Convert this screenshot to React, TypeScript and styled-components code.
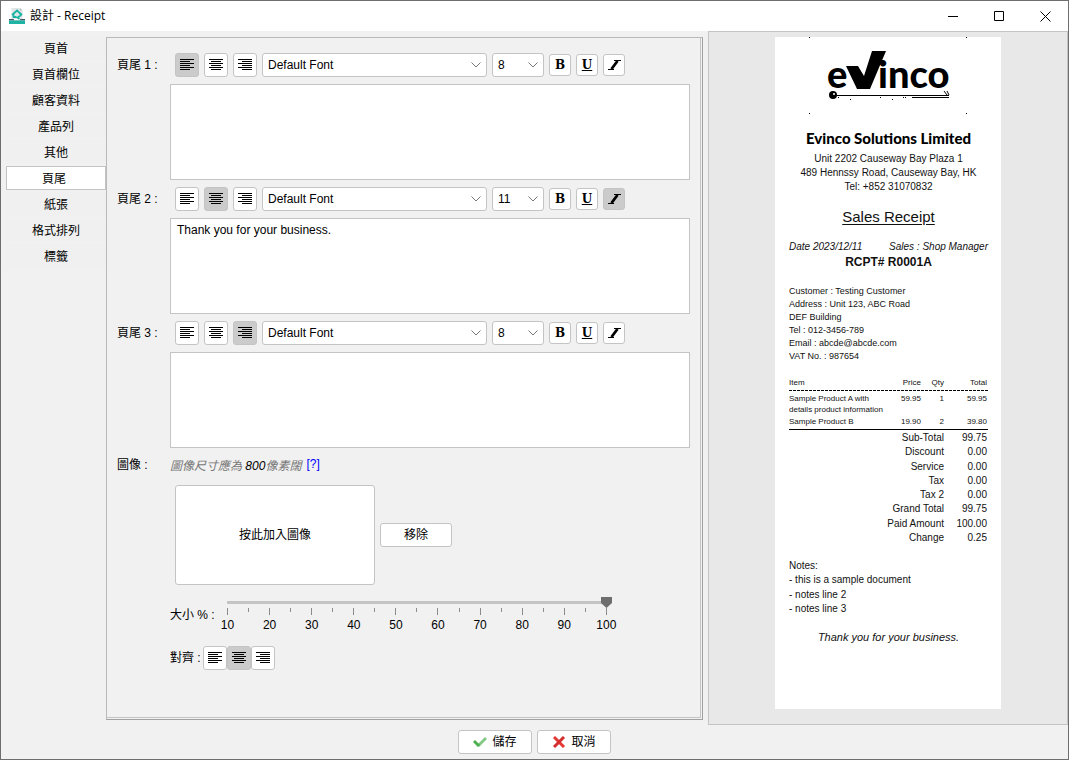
import React, { useState } from "react";
import styled, { createGlobalStyle, css } from "styled-components";

const sans = `"Liberation Sans", "Noto Sans CJK TC", sans-serif`;
const line = "#c4c4c4";

const GlobalStyle = createGlobalStyle`
  *, *::before, *::after { box-sizing: border-box; }
  body { margin: 0; background: #f1f1f1; color: #000; font: 12px/16px ${sans}; }
  button, select, textarea, input { font: inherit; color: inherit; }
`;

const Window = styled.div`
  display: flex;
  flex-direction: column;
  min-height: 100vh;
  border: 1px solid #6e6e6e;
`;

const TitleBar = styled.header`
  display: flex;
  align-items: center;
  height: 30px;
  padding-left: 8px;
  background: #fff;
`;

const Title = styled.h1`
  flex: 1;
  margin: 0 0 0 5px;
  font: 400 12px/16px "Open Sans", "Noto Sans CJK TC", sans-serif;
`;

const CaptionButton = styled.button`
  display: grid;
  place-items: center;
  width: 46px;
  height: 30px;
  padding: 0;
  border: 0;
  background: none;
`;

const Main = styled.main`
  flex: 1;
  display: grid;
  grid-template-columns: 100px minmax(0, 1fr) 360px;
  padding-left: 5px;
`;

const Tabs = styled.nav`
  display: flex;
  flex-direction: column;
  gap: 2px;
  padding-top: 5px;
`;

const Tab = styled.button<{ $active?: boolean }>`
  height: 24px;
  padding: 2px ${(p) => (p.$active ? 4 : 0)}px 0 0;
  border: 1px solid ${(p) => (p.$active ? line : "#f0f0f0")};
  background: ${(p) => (p.$active ? "#fff" : "#f0f0f0")};
`;

const Panel = styled.section`
  display: grid;
  grid-template-columns: 53px minmax(0, 1fr);
  align-content: start;
  margin: 6px 5px 5px 0;
  padding: 15px 12px 0 10px;
  border: 1px solid #b9b9b9;
  border-right-color: #a0a0a0;
  border-bottom-color: #a0a0a0;
  box-shadow: inset -1px -1px 0 #f1f1f1, inset -2px -2px 0 ${line};
`;

const FieldLabel = styled.label<{ $compact?: boolean }>`
  line-height: ${(p) => (p.$compact ? 20 : 24)}px;
`;

const Field = styled.div`
  margin-bottom: 7px;
`;

const Toolbar = styled.div<{ $joined?: boolean }>`
  display: flex;
  align-items: center;
  gap: ${(p) => (p.$joined ? 0 : 5)}px;
  padding-left: ${(p) => (p.$joined ? 0 : 5)}px;
`;

const frame = css`
  border: 1px solid ${line};
  border-radius: 3px;
  background: #fff;
`;

const ToolButton = styled.button<{ $on?: boolean; $small?: boolean }>`
  ${frame}
  display: grid;
  place-items: center;
  flex: none;
  width: ${(p) => (p.$small ? 22 : 24)}px;
  height: ${(p) => (p.$small ? 22 : 24)}px;
  padding: 0;
  background: ${(p) => (p.$on ? "#cbcbcb" : "#fff")};
  font: 700 12px/16px "DejaVu Serif", serif;
`;

const SelectBox = styled.span<{ $width: number }>`
  position: relative;
  width: ${(p) => p.$width}px;
  height: 24px;
`;

const SelectInput = styled.select`
  ${frame}
  appearance: none;
  width: 100%;
  height: 100%;
  padding: 0 20px 0 5px;
`;

const Chevron = styled.svg`
  position: absolute;
  top: 9px;
  right: 6px;
  pointer-events: none;
`;

const TextArea = styled.textarea`
  display: block;
  width: 100%;
  height: 96px;
  margin-top: 7px;
  padding: 3px 6px;
  border: 1px solid ${line};
  background: #fff;
  resize: none;
`;

const Hint = styled.p`
  display: flex;
  gap: 5px;
  margin: 0;
  line-height: 22px;
  color: #777;
  b { font-weight: 400; color: #000; }
  a { color: #00f; text-decoration: none; line-height: 18px; }
`;

const ImageRow = styled.div`
  display: flex;
  align-items: center;
  gap: 5px;
  padding: 8px 0 0 5px;
`;

const PushButton = styled.button<{ $w: number; $h: number }>`
  ${frame}
  display: flex;
  align-items: center;
  justify-content: center;
  gap: 5px;
  width: ${(p) => p.$w}px;
  height: ${(p) => p.$h}px;
  padding: 0;
`;

const SliderRow = styled.div`
  display: flex;
  align-items: center;
  margin-top: 12px;
`;

const SliderLabel = styled.label`
  width: 47px;
  white-space: nowrap;
`;

const SliderBody = styled.div`
  width: 400px;
`;

const Range = styled.input`
  appearance: none;
  display: block;
  width: 390px;
  height: 11px;
  margin: 0 5px;
  background: transparent;
  &::-webkit-slider-runnable-track {
    height: 11px;
    background: linear-gradient(${line}, ${line}) center / calc(100% - 10px) 3px no-repeat;
  }
  &::-webkit-slider-thumb {
    appearance: none;
    width: 11px;
    height: 11px;
    background: #6e6e6e;
    clip-path: polygon(0 0, 100% 0, 100% 55%, 50% 100%, 0 55%);
  }
`;

const Scale = styled.div`
  display: flex;
`;

const Tick = styled.span<{ $major: boolean }>`
  display: flex;
  flex: 1 1 0;
  flex-direction: column;
  align-items: center;
  min-width: 0;
  &::before {
    content: "";
    width: 1px;
    height: ${(p) => (p.$major ? 7 : 4)}px;
    background: #8c8c8c;
    margin-bottom: 2px;
  }
`;

const AlignRow = styled.div`
  display: flex;
  align-items: center;
  margin-top: 13px;
  > span { width: 33px; }
`;

const Preview = styled.aside`
  display: flex;
  justify-content: center;
  padding: 5px 0 15px;
  border: 1px solid ${line};
  background: #e8e8e8;
`;

const Paper = styled.article`
  width: 226px;
  padding: 0 13px 0 14px;
  background: #fff;
  color: #111;
  font-size: 10px;
  line-height: 14px;
`;

const LogoArt = styled.svg`
  display: block;
  margin: 0 auto;
`;

const Company = styled.h2`
  margin: 16px 0 6px;
  text-align: center;
  font: 900 15px/16px Lato, sans-serif;
  color: #000;
`;

const Centered = styled.p`
  margin: 0;
  text-align: center;
`;

const DocTitle = styled.h3`
  margin: 14px 0 13px;
  text-align: center;
  font-size: 15px;
  line-height: 18px;
  font-weight: 400;
  text-decoration: underline;
  text-underline-offset: 2px;
`;

const DateRow = styled.div`
  display: flex;
  justify-content: space-between;
  font-style: italic;
  line-height: 16px;
`;

const Number = styled.p`
  margin: 0 0 16px;
  text-align: center;
  font-size: 12px;
  font-weight: 700;
`;

const Customer = styled.address`
  font-size: 9px;
  line-height: 13px;
  font-style: normal;
`;

const Items = styled.table`
  width: 199px;
  margin-top: 14px;
  table-layout: fixed;
  border-collapse: collapse;
  border-bottom: 1px solid #000;
  font-size: 8px;
  line-height: 11px;
  thead {
    background: repeating-linear-gradient(90deg, #000 0 3px, transparent 3px 4px) bottom / 100% 1px no-repeat;
  }
  th, td { padding: 0 1px 0 0; font-weight: 400; text-align: right; vertical-align: top; }
  th { padding-bottom: 3px; }
  tbody td { padding-top: 2px; }
  tr + tr td { padding-top: 1px; padding-bottom: 2px; }
  th:first-child, td:first-child { padding-right: 0; text-align: left; }
`;

const Totals = styled.table`
  width: 199px;
  margin-top: 1px;
  border-collapse: collapse;
  table-layout: fixed;
  th, td { padding: 0 1px 0 0; font-weight: 400; text-align: right; }
  tr:nth-child(4n + 3) > * { padding-top: 1px; }
`;

const Notes = styled.div`
  margin: 14px 0;
  div:nth-child(3) { padding-top: 1px; }
`;

const Thanks = styled.p`
  margin: 0;
  text-align: center;
  font-size: 11px;
  font-style: italic;
`;

const Footer = styled.footer`
  display: flex;
  justify-content: center;
  gap: 5px;
  padding: 5px 0;
`;

type Align = "left" | "center" | "right";

const alignNames: Record<Align, string> = { left: "靠左", center: "置中", right: "靠右" };

function AlignIcon({ align }: { align: Align }) {
  return (
    <svg width="14" height="12" viewBox="0 0 14 12" aria-hidden="true">
      {[14, 10, 14, 10, 14, 10].map((w, i) => (
        <rect key={i} x={align === "left" ? 0 : align === "right" ? 14 - w : (14 - w) / 2} y={i * 2} width={w} height="1" />
      ))}
    </svg>
  );
}

function AlignButtons({ value, onChange }: { value: Align; onChange: (a: Align) => void }) {
  return (
    <>
      {(["left", "center", "right"] as Align[]).map((a) => (
        <ToolButton key={a} type="button" $on={a === value} aria-label={alignNames[a]} aria-pressed={a === value} onClick={() => onChange(a)}>
          <AlignIcon align={a} />
        </ToolButton>
      ))}
    </>
  );
}

function Select({ width, label, options, value }: { width: number; label: string; options: string[]; value: string }) {
  return (
    <SelectBox $width={width}>
      <SelectInput aria-label={label} defaultValue={value}>
        {options.map((o) => (
          <option key={o}>{o}</option>
        ))}
      </SelectInput>
      <Chevron width="10" height="6" viewBox="0 0 10 6" fill="none" stroke="#777" aria-hidden="true">
        <path d="M0.5 0.5 5 5 9.5 0.5" />
      </Chevron>
    </SelectBox>
  );
}

interface FooterFieldProps {
  index: number;
  initialAlign: Align;
  size: string;
  italic?: boolean;
  text?: string;
}

function FooterField({ index, initialAlign, size, italic = false, text = "" }: FooterFieldProps) {
  const [align, setAlign] = useState<Align>(initialAlign);
  const [isBold, setBold] = useState(false);
  const [isUnderlined, setUnderlined] = useState(false);
  const [isItalic, setItalic] = useState(italic);
  const id = `footer-${index}`;
  return (
    <>
      <FieldLabel htmlFor={id}>頁尾 {index} :</FieldLabel>
      <Field>
        <Toolbar>
          <AlignButtons value={align} onChange={setAlign} />
          <Select width={225} label="字型" options={["Default Font"]} value="Default Font" />
          <Select width={52} label="字型大小" options={["8", "9", "10", "11", "12"]} value={size} />
          <ToolButton type="button" $small $on={isBold} onClick={() => setBold(!isBold)}>B</ToolButton>
          <ToolButton type="button" $small $on={isUnderlined} onClick={() => setUnderlined(!isUnderlined)}>
            <u>U</u>
          </ToolButton>
          <ToolButton type="button" $small $on={isItalic} aria-label="斜體" onClick={() => setItalic(!isItalic)}>
            <svg width="13" height="10" viewBox="0 0 13 10" fill="none" stroke="#000" aria-hidden="true">
              <path d="M6 0.5h7M0 9.5h6" />
              <path d="M9.500 1 3.500 9" strokeWidth="2.800" />
            </svg>
          </ToolButton>
        </Toolbar>
        <TextArea id={id} defaultValue={text} spellCheck={false} />
      </Field>
    </>
  );
}

function AppIcon() {
  return (
    <svg width="16" height="16" viewBox="0 0 16 16" aria-hidden="true">
      <path d="M2.500 0h8.500l2.500 2.500V11h-11z" fill="#e3e6e8" />
      <path d="M11 0v2.500h2.500z" fill="#b8bec4" />
      <path d="M3 7 8 2.500 13 7M4.500 6v3h3M11.500 6v1.500L8.500 9.500l2 1.500" fill="none" stroke="#19b5a2" strokeWidth="1.800" />
      <path d="M0 11h4.500l1 1.200h5l1-1.200H16v1.500H0z" fill="#3f5566" />
      <path d="M0 12.500h16V16H0z" fill="#1fb3a3" />
    </svg>
  );
}

function Logo() {
  return (
    <LogoArt width="159" height="77" viewBox="0 0 159 77" role="img" aria-label="eVinco">
      <path d="M0 0h1v1H0zM157 0h1v1h-1zM0 76h1v1H0zM157 76h1v1h-1z" />
      <g fontFamily="Lato, sans-serif" fontWeight="900" fontSize="38">
        <text x="18" y="51">e</text>
        <text x="69" y="51">inco</text>
      </g>
      <path d="M37 29h12l6 10 8-25h14L61 52H48z" />
      <circle cx="24" cy="58" r="4" />
      <circle cx="25" cy="57" r="1" fill="#fff" />
      <path d="M28 58h112M103 60h37M29 60h1M41 62h1M71 60h1M83 62h1M94 60h1M96 60h1" stroke="#000" transform="translate(0 .5)" />
      <path d="m135 54 3 4M138 54l2 4" stroke="#000" fill="none" />
    </LogoArt>
  );
}

const tabs = ["頁首", "頁首欄位", "顧客資料", "產品列", "其他", "頁尾", "紙張", "格式排列", "標籤"];

const totals = [
  ["Sub-Total", "99.75"],
  ["Discount", "0.00"],
  ["Service", "0.00"],
  ["Tax", "0.00"],
  ["Tax 2", "0.00"],
  ["Grand Total", "99.75"],
  ["Paid Amount", "100.00"],
  ["Change", "0.25"],
];

function Receipt() {
  return (
    <Paper>
      <Logo />
      <Company>Evinco Solutions Limited</Company>
      <Centered>Unit 2202 Causeway Bay Plaza 1</Centered>
      <Centered>489 Hennssy Road, Causeway Bay, HK</Centered>
      <Centered>Tel: +852 31070832</Centered>
      <DocTitle>Sales Receipt</DocTitle>
      <DateRow>
        <span>Date 2023/12/11</span>
        <span>Sales : Shop Manager</span>
      </DateRow>
      <Number>RCPT# R0001A</Number>
      <Customer>
        <div>Customer : Testing Customer</div>
        <div>Address : Unit 123, ABC Road</div>
        <div>DEF Building</div>
        <div>Tel : 012-3456-789</div>
        <div>Email : abcde@abcde.com</div>
        <div>VAT No. : 987654</div>
      </Customer>
      <Items>
        <colgroup>
          <col />
          <col style={{ width: 34 }} />
          <col style={{ width: 23 }} />
          <col style={{ width: 43 }} />
        </colgroup>
        <thead>
          <tr><th>Item</th><th>Price</th><th>Qty</th><th>Total</th></tr>
        </thead>
        <tbody>
          <tr><td>Sample Product A with<br />details product information</td><td>59.95</td><td>1</td><td>59.95</td></tr>
          <tr><td>Sample Product B</td><td>19.90</td><td>2</td><td>39.80</td></tr>
        </tbody>
      </Items>
      <Totals>
        <colgroup>
          <col />
          <col style={{ width: 43 }} />
        </colgroup>
        <tbody>
          {totals.map(([name, amount]) => (
            <tr key={name}><th scope="row">{name}</th><td>{amount}</td></tr>
          ))}
        </tbody>
      </Totals>
      <Notes>
        <div>Notes:</div>
        <div>- this is a sample document</div>
        <div>- notes line 2</div>
        <div>- notes line 3</div>
      </Notes>
      <Thanks>Thank you for your business.</Thanks>
    </Paper>
  );
}

export default function App() {
  const [active, setActive] = useState("頁尾");
  const [imageAlign, setImageAlign] = useState<Align>("center");
  return (
    <Window>
      <GlobalStyle />
      <TitleBar>
        <AppIcon />
        <Title>設計 - Receipt</Title>
        <CaptionButton type="button" aria-label="最小化">
          <svg width="11" height="11" aria-hidden="true"><path d="M0 5.500h10" stroke="#000" /></svg>
        </CaptionButton>
        <CaptionButton type="button" aria-label="最大化">
          <svg width="11" height="11" aria-hidden="true"><path d="M.5.5h9v9h-9z" stroke="#000" fill="none" /></svg>
        </CaptionButton>
        <CaptionButton type="button" aria-label="關閉">
          <svg width="11" height="11" aria-hidden="true"><path d="m.5.5 10 10m0-10-10 10" stroke="#000" /></svg>
        </CaptionButton>
      </TitleBar>
      <Main>
        <Tabs>
          {tabs.map((t) => (
            <Tab key={t} type="button" $active={t === active} onClick={() => setActive(t)}>{t}</Tab>
          ))}
        </Tabs>
        <Panel>
          <FooterField index={1} initialAlign="left" size="8" />
          <FooterField index={2} initialAlign="center" size="11" italic text="Thank you for your business." />
          <FooterField index={3} initialAlign="right" size="8" />
          <FieldLabel as="span" $compact>圖像 :</FieldLabel>
          <div>
            <Hint>
              <i>圖像尺寸應為 <b>800</b>像素闊</i>
              <a href="#help">[?]</a>
            </Hint>
            <ImageRow>
              <PushButton type="button" $w={200} $h={100}>按此加入圖像</PushButton>
              <PushButton type="button" $w={72} $h={24}>移除</PushButton>
            </ImageRow>
            <SliderRow>
              <SliderLabel htmlFor="image-size">大小 % :</SliderLabel>
              <SliderBody>
                <Range id="image-size" type="range" min={10} max={100} defaultValue={100} />
                <Scale aria-hidden="true">
                  {Array.from({ length: 19 }, (_, i) => (
                    <Tick key={i} $major={i % 2 === 0}>{i % 2 === 0 ? 10 + i * 5 : null}</Tick>
                  ))}
                </Scale>
              </SliderBody>
            </SliderRow>
            <AlignRow>
              <span>對齊 :</span>
              <Toolbar $joined>
                <AlignButtons value={imageAlign} onChange={setImageAlign} />
              </Toolbar>
            </AlignRow>
          </div>
        </Panel>
        <Preview>
          <Receipt />
        </Preview>
      </Main>
      <Footer>
        <PushButton type="button" $w={74} $h={24}>
          <svg width="14" height="12" viewBox="0 0 14 12" fill="none" strokeWidth="3" aria-hidden="true">
            <path d="M5 10 13 2" stroke="#85c987" />
            <path d="M1 5l5 5" stroke="#4caf50" />
          </svg>
          儲存
        </PushButton>
        <PushButton type="button" $w={74} $h={24}>
          <svg width="14" height="12" viewBox="0 0 14 12" fill="none" strokeWidth="3" aria-hidden="true">
            <path d="M2 1l10 10" stroke="#e53935" />
            <path d="M12 1 2 11" stroke="#d32f2f" />
          </svg>
          取消
        </PushButton>
      </Footer>
    </Window>
  );
}
